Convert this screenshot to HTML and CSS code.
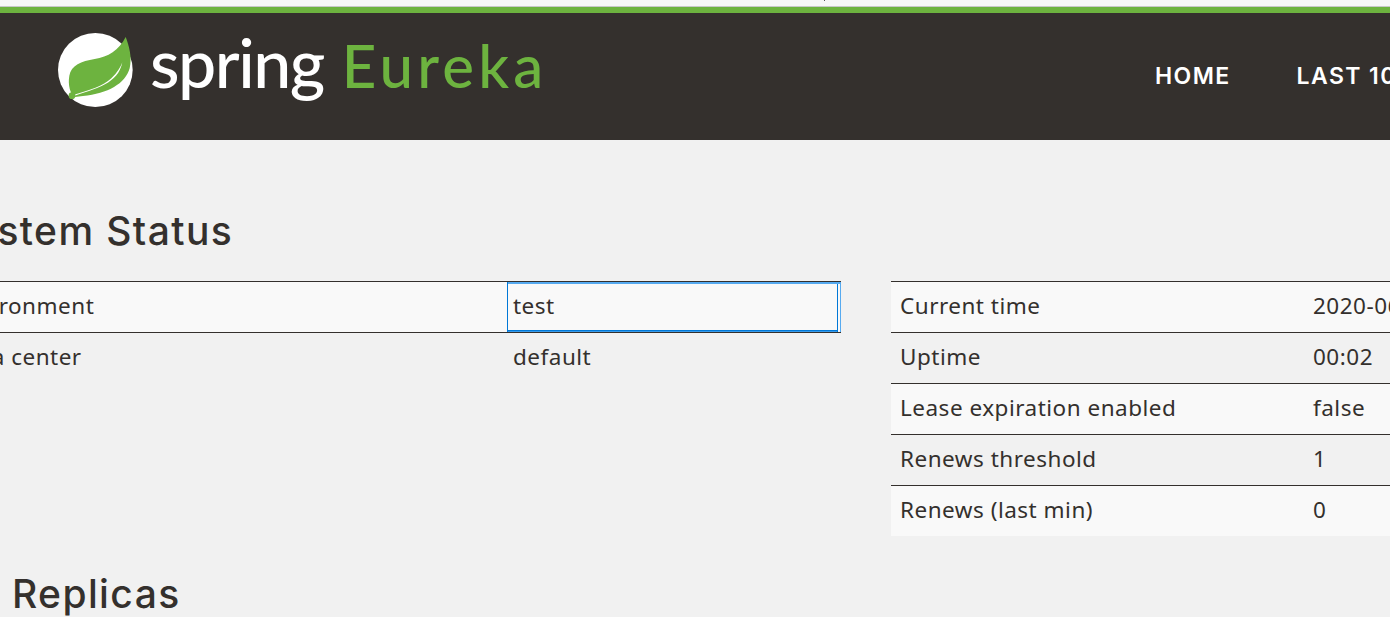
FILE: index.html
```html
<!DOCTYPE html>
<html lang="en">
<head>
<meta charset="utf-8">
<title>Eureka</title>
<link rel="stylesheet" href="styles.css">
</head>
<body>
<div class="page">
  <div class="topstrip"><span class="speck"></span></div>
  <header class="navbar">
    <a class="brand" href="#">
      <svg class="leaf" viewBox="55 40 225 222" width="75" height="74" aria-hidden="true">
        <ellipse cx="167" cy="151" rx="112" ry="111" fill="#fff"/>
        <path d="M258 52C268 78 278 112 270 146C257 192 205 222 130 229L106 232C92 225 84 195 89 168C94 138 125 124 165 118C205 112 238 92 258 52Z" fill="#6db33f"/>
        <path d="M103 225C150 212 190 200 215 176C232 160 243 142 248 128C242 160 222 180 196 194C165 210 130 220 103 229Z" fill="#fff"/>
        <circle cx="97" cy="228" r="10" fill="#6db33f"/>
      </svg>
      <span class="brand-text"><span class="brand-spring">spring</span><span class="brand-eureka">Eureka</span></span>
    </a>
    <nav class="nav">
      <a href="#">HOME</a>
      <a href="#">LAST 1000 SINCE STARTUP</a>
    </nav>
  </header>
  <main class="content">
    <h1 class="title">System Status</h1>
    <div class="columns">
      <table class="tbl tbl-left">
        <tr class="odd"><td class="c1">Environment</td><td class="c2 focus">test</td></tr>
        <tr><td class="c1">Data center</td><td class="c2">default</td></tr>
      </table>
      <table class="tbl tbl-right">
        <tr class="odd"><td class="c1">Current time</td><td>2020-06-22T11:08:22 +0800</td></tr>
        <tr><td class="c1">Uptime</td><td>00:02</td></tr>
        <tr class="odd"><td class="c1">Lease expiration enabled</td><td>false</td></tr>
        <tr><td class="c1">Renews threshold</td><td>1</td></tr>
        <tr class="odd"><td class="c1">Renews (last min)</td><td>0</td></tr>
      </table>
    </div>
    <h1 class="title replicas">DS Replicas</h1>
  </main>
</div>
</body>
</html>
```
FILE: styles.css
```css
html, body {
  margin: 0;
  padding: 0;
  height: 100%;
  overflow: hidden;
  background: #f1f1f1;
}
.page {
  width: 1900px;
  font-family: "Noto Sans", sans-serif;
  color: #34302d;
}
.topstrip {
  height: 6px;
  background: #f7f7f7;
  border-bottom: 1px solid #c8c8c8;
  position: relative;
}
.speck {
  position: absolute;
  left: 824px;
  top: 0;
  width: 1px;
  height: 1px;
  background: #555;
}
.navbar {
  height: 127px;
  background: #34302d;
  border-top: 6px solid #6db33f;
  display: flex;
  align-items: flex-start;
}
.brand {
  display: flex;
  align-items: flex-start;
  text-decoration: none;
  padding: 20px 0 0 58px;
  width: 1155px;
  box-sizing: border-box;
  filter: blur(0.4px);
}
.leaf { flex: none; }
.brand-text {
  display: block;
  margin: -6px 0 0 17px;
  white-space: nowrap;
  font-family: "Lato", sans-serif;
  font-weight: 500;
  line-height: 70px;
}
.brand-spring {
  font-size: 68px;
  letter-spacing: -1.5px;
  color: #fff;
}
.brand-eureka {
  font-size: 60px;
  color: #6db33f;
  margin-left: 18px;
  letter-spacing: 4.2px;
}
.nav {
  display: flex;
  gap: 66px;
  padding-top: 49px;
  white-space: nowrap;
}
.nav a {
  color: #fff;
  text-decoration: none;
  font-family: "Inter", sans-serif;
  font-weight: 600;
  font-size: 23px;
  letter-spacing: 1.4px;
  line-height: 28px;
}
.content {
  margin-left: -57px;
}
.title {
  margin: 0 0 0 4px;
  padding-top: 67px;
  font-family: "Inter", sans-serif;
  font-weight: 500;
  font-size: 39px;
  letter-spacing: 1.4px;
  line-height: 48px;
  color: #34302d;
}
.replicas {
  padding-top: 34px;
  margin-left: 1px;
}
.columns {
  display: flex;
  align-items: flex-start;
  gap: 50px;
  margin-top: 26px;
}
.tbl {
  border-collapse: collapse;
  font-size: 22.5px;
  letter-spacing: 0.5px;
  line-height: 30px;
  table-layout: fixed;
}
.tbl td {
  border-top: 1px solid #34302d;
  padding: 9px 9px 11px;
  height: 30px;
  white-space: nowrap;
  overflow: hidden;
}
.odd td { background: #f9f9f9; }
.tbl-left { width: 898px; }
.tbl-left .c1 { width: 545px; padding-left: 10px; }
.tbl-left .c2 { padding-left: 6px; }
.tbl-right { width: 900px; }
.tbl-right .c1 { width: 395px; }
.tbl-left tr:first-child td { border-bottom: 1px solid #34302d; }
.focus {
  box-shadow:
    -1px 0 0 #0078d7,
    inset 1px 0 0 #0078d7,
    inset 0 2px 0 #56aaf0,
    inset -1px 0 0 #56aaf0,
    inset -3px 0 0 #f9f9f9,
    inset -4px 0 0 #0078d7,
    inset 0 -1px 0 #3a9bea,
    inset 0 -2px 0 #0078d7;
}
```
